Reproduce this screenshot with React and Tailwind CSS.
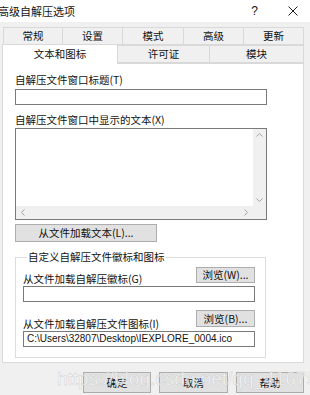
import React from "react";

const font = { fontFamily: '"Noto Sans CJK SC", "Noto Sans", sans-serif' };
const latin = { fontFamily: '"Liberation Sans", Arial, sans-serif' };

function Tab({ label, w, selected }) {
  return (
    <div
      className={
        selected
          ? "h-[20px] bg-white border border-[#d9d9d9] border-b-0 flex items-start justify-center pt-[1px] relative z-10 -mb-[1px]"
          : "h-[18px] bg-[#f0f0f0] border border-[#d9d9d9] -ml-[1px] flex items-center justify-center"
      }
      style={{ width: w }}
    >
      {label}
    </div>
  );
}

function Input({ value, className }) {
  return (
    <div
      className={"h-[16px] bg-white border border-[#7a7a7a] text-[10px] leading-[14px] pl-[3px] whitespace-nowrap overflow-hidden " + (className || "")}
      style={latin}
    >
      {value}
    </div>
  );
}

function Btn({ label, className }) {
  return (
    <div className={"bg-[#e1e1e1] border border-[#adadad] flex items-center justify-center " + (className || "")}>
      {label}
    </div>
  );
}

export default function App() {
  return (
    <div className="w-[310px] h-[395px] overflow-hidden flex flex-col bg-[#f0f0f0] text-[10.5px] text-[#111] relative" style={font}>
      {/* title bar */}
      <div className="h-[22px] bg-white flex items-center shrink-0">
        <span className="-ml-[2px] leading-[14px] text-[11px]">高级自解压选项</span>
        <span className="ml-auto mr-[30px] text-[12px]" style={latin}>?</span>
        <svg width="10" height="10" viewBox="0 0 10 10" className="mr-[12px]">
          <path d="M0.5 0.5 L9.5 9.5 M9.5 0.5 L0.5 9.5" stroke="#222" strokeWidth="1" />
        </svg>
      </div>

      {/* tabs */}
      <div className="flex pl-[4px] mt-[5px]">
        <Tab label="常规" w={60} />
        <Tab label="设置" w={61} />
        <Tab label="模式" w={62} />
        <Tab label="高级" w={61} />
        <Tab label="更新" w={61} />
      </div>
      <div className="flex pl-[2px] -mt-[1px] items-end">
        <Tab label="文本和图标" w={116} selected />
        <Tab label="许可证" w={93} />
        <Tab label="模块" w={95} />
      </div>

      {/* panel */}
      <div className="ml-[2px] w-[302px] h-[300px] bg-white border border-[#d9d9d9] pl-[12px] pr-[36px] pt-[9px] flex flex-col">
        <div className="leading-[14px]">自解压文件窗口标题(T)</div>
        <Input className="mt-[2px] w-[252px]" />
        <div className="leading-[14px] mt-[8px]">自解压文件窗口中显示的文本(X)</div>
        <div className="mt-[1px] w-[252px] h-[92px] border border-[#7a7a7a] flex flex-col">
          <div className="flex flex-1">
            <div className="flex-1" />
            <div className="w-[13px] bg-[#f0f0f0] flex flex-col items-center justify-between py-[4px]">
              <svg width="7" height="4" viewBox="0 0 7 4"><path d="M0.5 3.5 L3.5 0.5 L6.5 3.5" stroke="#a3a3a3" fill="none" /></svg>
              <svg width="7" height="4" viewBox="0 0 7 4"><path d="M0.5 0.5 L3.5 3.5 L6.5 0.5" stroke="#a3a3a3" fill="none" /></svg>
            </div>
          </div>
          <div className="h-[13px] flex">
            <div className="flex-1 bg-[#f0f0f0] flex items-center justify-between px-[5px]">
              <svg width="4" height="7" viewBox="0 0 4 7"><path d="M3.5 0.5 L0.5 3.5 L3.5 6.5" stroke="#a3a3a3" fill="none" /></svg>
              <svg width="4" height="7" viewBox="0 0 4 7"><path d="M0.5 0.5 L3.5 3.5 L0.5 6.5" stroke="#a3a3a3" fill="none" /></svg>
            </div>
            <div className="w-[13px] bg-[#f0f0f0]" />
          </div>
        </div>
        <Btn label="从文件加载文本(L)..." className="mt-[4px] w-[142px] h-[18px]" />

        <fieldset className="mt-[8px] w-[251px] h-[108px] border border-[#dcdcdc] pl-[7px] pr-[10px]">
          <legend className="ml-[4px] px-[1px] leading-[14px]">自定义自解压文件徽标和图标</legend>
          <div className="flex items-end justify-between mt-[3px]">
            <span className="leading-[14px] mb-[-3px]">从文件加载自解压徽标(G)</span>
            <Btn label="浏览(W)..." className="w-[59px] h-[16px]" />
          </div>
          <Input className="mt-[3px] w-[232px]" />
          <div className="flex items-end justify-between mt-[8px]">
            <span className="leading-[14px] mb-[-4px]">从文件加载自解压文件图标(I)</span>
            <Btn label="浏览(B)..." className="w-[59px] h-[17px] border-[#0078d7]" />
          </div>
          <Input className="mt-[4px] w-[232px]" value="C:\Users\32807\Desktop\IEXPLORE_0004.ico" />
        </fieldset>
      </div>

      {/* bottom buttons */}
      <div className="flex justify-end gap-[8px] pr-[6px] mt-[9px]">
        <Btn label="确定" className="w-[68px] h-[21px]" />
        <Btn label="取消" className="w-[69px] h-[21px]" />
        <Btn label="帮助" className="w-[68px] h-[21px]" />
      </div>

      {/* watermark */}
      <div
        className="absolute left-[57px] top-[368px] text-[19px] leading-[22px] text-white pointer-events-none"
        style={{ ...latin, WebkitTextStroke: "0.5px #c8c8c8", opacity: 0.8 }}
      >
        https://blog.csdn.net/qq_41679358
      </div>
    </div>
  );
}
